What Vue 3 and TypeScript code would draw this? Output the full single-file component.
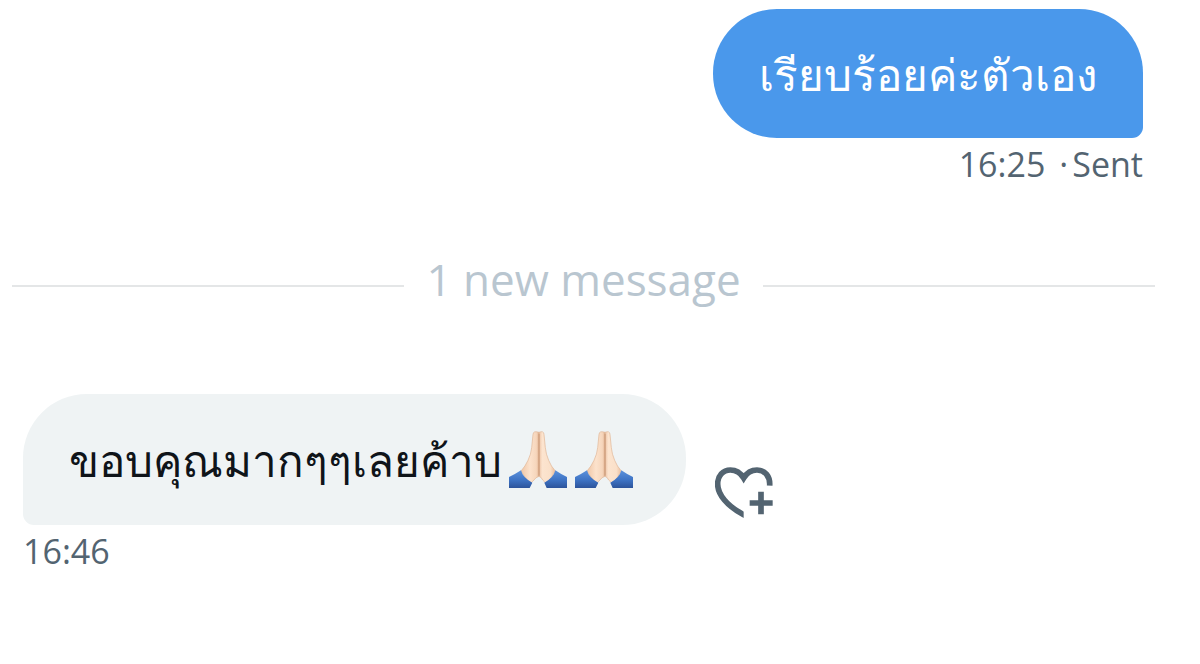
<script setup lang="ts">
interface Message {
  id: number
  text: string
  hands: number
  time: string
  status?: string
}

const sent: Message = { id: 1, text: 'เรียบร้อยค่ะตัวเอง', hands: 0, time: '16:25', status: 'Sent' }
const received: Message = { id: 2, text: 'ขอบคุณมากๆๆเลยค้าบ', hands: 2, time: '16:46' }
const unread = 1
</script>

<template>
  <main class="thread">
    <section class="message outgoing">
      <p class="bubble">{{ sent.text }}</p>
      <p class="meta"><time>{{ sent.time }}</time><span class="dot">·</span><span>{{ sent.status }}</span></p>
    </section>

    <div class="divider"><span>{{ unread }} new message</span></div>

    <section class="message incoming">
      <div class="row">
        <p class="bubble">
          <span>{{ received.text }}</span>
          <span class="emojis">
            <svg v-for="n in received.hands" :key="n" class="hands" viewBox="0 0 174 171" role="img" aria-label="Folded hands">
              <defs>
                <linearGradient :id="`skinL${n}`" x1="0" x2="1">
                  <stop offset="0" stop-color="#f0c6a6" />
                  <stop offset=".5" stop-color="#fce2cc" />
                  <stop offset=".85" stop-color="#f6d6bc" />
                  <stop offset="1" stop-color="#e3b595" />
                </linearGradient>
                <linearGradient :id="`skinR${n}`" x1="0" x2="1">
                  <stop offset="0" stop-color="#ecc3a6" />
                  <stop offset=".2" stop-color="#fce4cf" />
                  <stop offset=".7" stop-color="#fae0c9" />
                  <stop offset="1" stop-color="#eabd9d" />
                </linearGradient>
                <linearGradient :id="`cuff${n}`" x1="0" x2="0" y1="0" y2="1">
                  <stop offset="0" stop-color="#5b91dc" />
                  <stop offset=".55" stop-color="#3e73c4" />
                  <stop offset="1" stop-color="#2d549b" />
                </linearGradient>
              </defs>
              <path :fill="`url(#skinL${n})`" stroke="#dfb596" stroke-width="2" d="M90 4Q73 -2 72 10L68 50Q66 70 57 88Q49 106 36 120L62 160L75 147Q80 139 90 136Z" />
              <path :fill="`url(#skinR${n})`" stroke="#dfb596" stroke-width="2" d="M90 4Q104 -2 105 10L109 50Q111 70 119 88Q126 106 139 120L114 160L101 147Q98 139 90 136Z" />
              <path fill="none" stroke="#cf9f7e" stroke-width="4" d="M90 8V134" />
              <path :fill="`url(#cuff${n})`" d="M0 138Q18 130 36 118Q41 140 70 155L62 171H0Z" />
              <path :fill="`url(#cuff${n})`" d="M174 138Q156 130 139 118Q134 140 106 155L113 171H174Z" />
            </svg>
          </span>
        </p>
        <button class="react" type="button" aria-label="Add reaction">
          <svg viewBox="46 50 174 153" aria-hidden="true">
            <clipPath id="heart-cut"><path d="M40 40H225V120H132V210H40Z" /></clipPath>
            <g fill="none" stroke="currentColor" stroke-width="17">
              <path clip-path="url(#heart-cut)" d="M210 106C212 78 196 59 172 59C154 59 141 68 132 83C123 68 110 59 92 59C70 59 54 76 54 101C54 132 82 167 132 193L150 202" />
              <path d="M150 158H219M184 124V192" />
            </g>
          </svg>
        </button>
      </div>
      <p class="meta"><time>{{ received.time }}</time></p>
    </section>
  </main>
</template>

<style>
body {
  margin: 0;
  background: #fff;
}
</style>

<style scoped>
.thread {
  box-sizing: border-box;
  padding: 9px 45px 40px 12px;
  font-family: "Open Sans", "Noto Sans", sans-serif;
}
p {
  margin: 0;
}
.message {
  display: flex;
  flex-direction: column;
  padding: 0 12px 0 11px;
}
.outgoing {
  align-items: flex-end;
}
.incoming {
  align-items: flex-start;
}
.bubble {
  display: flex;
  align-items: center;
  box-sizing: border-box;
  min-height: 129px;
  padding: 24px 46px;
  border-radius: 64px;
  font-size: 44px;
  font-weight: 500;
  line-height: 64px;
  white-space: nowrap;
}
.outgoing .bubble {
  color: #fff;
  background: #4a98eb;
  border-bottom-right-radius: 11px;
}
.incoming .bubble {
  min-height: 131px;
  padding-right: 53px;
  color: #0f1419;
  background: #eff3f4;
  border-bottom-left-radius: 11px;
}
.meta {
  display: flex;
  color: #536471;
  font-size: 34px;
  line-height: 52px;
}
.dot {
  margin: 0 4px 0 14px;
}
.divider {
  display: flex;
  align-items: center;
  gap: 22px;
  margin: 57px 0 69px;
  color: #b9c6d0;
  font-size: 44px;
  line-height: 64px;
}
.divider span {
  padding-bottom: 14px;
}
.divider::before,
.divider::after {
  content: "";
  flex: 1;
  height: 2px;
  background: #e4e6e7;
}
.row {
  display: flex;
  align-items: flex-end;
  gap: 29px;
}
.emojis {
  display: flex;
  gap: 8px;
  margin-left: 7px;
}
.hands {
  width: 58px;
  height: 57px;
}
.react {
  display: flex;
  padding: 0;
  margin-bottom: 7px;
  border: 0;
  color: #536471;
  background: none;
}
.react svg {
  width: 58px;
  height: 51px;
}
</style>
